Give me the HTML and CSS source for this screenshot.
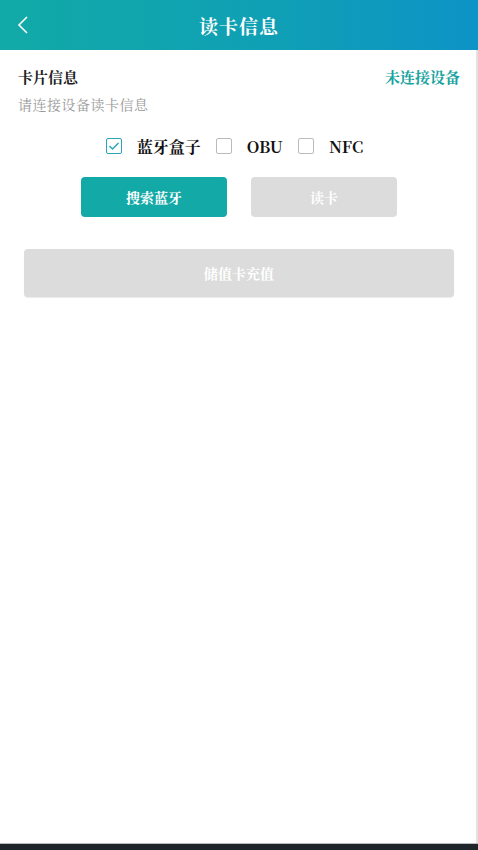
FILE: index.html
```html
<!DOCTYPE html>
<html lang="zh-CN">
<head>
  <meta charset="UTF-8" />
  <meta name="viewport" content="width=device-width, initial-scale=1.0" />
  <title>读卡信息</title>
  <link rel="stylesheet" href="styles.css">
</head>
<body>
  <div class="page">
    <div class="nav-bar">
      <span class="back">
        <svg width="14" height="20" viewBox="0 0 14 20"><path d="M11 2 L3 10 L11 18" fill="none" stroke="#fff" stroke-width="1.6"/></svg>
      </span>
      <h1>读卡信息</h1>
    </div>

    <div class="content">
      <div class="info-head">
        <span class="info-title">卡片信息</span>
        <span class="status">未连接设备</span>
      </div>
      <p class="hint">请连接设备读卡信息</p>

      <div class="modes">
        <label class="mode">
          <span class="box checked">
            <svg width="12" height="10" viewBox="0 0 12 10"><path d="M1.5 5 L4.5 8 L10.5 2" fill="none" stroke="#2aa6b4" stroke-width="1.5"/></svg>
          </span>
          <span>蓝牙盒子</span>
        </label>
        <label class="mode">
          <span class="box"></span>
          <span>OBU</span>
        </label>
        <label class="mode">
          <span class="box"></span>
          <span>NFC</span>
        </label>
      </div>

      <div class="actions">
        <button class="btn primary">搜索蓝牙</button>
        <button class="btn disabled">读卡</button>
      </div>

      <button class="btn wide disabled">储值卡充值</button>
    </div>

    <div class="bottom-bar"></div>
  </div>
</body>
</html>
```

FILE: styles.css
```css
* {
  margin: 0;
  padding: 0;
  box-sizing: border-box;
}

body {
  font-family: "Noto Serif CJK SC", "Liberation Serif", serif;
  background: #fff;
  height: 850px;
  overflow: hidden;
}

.page {
  height: 850px;
  display: flex;
  flex-direction: column;
  border-right: 2px solid #e2e2e2;
}

.nav-bar {
  height: 50px;
  background: linear-gradient(90deg, #12aaa7 0%, #0f9fb6 60%, #0d93c6 100%);
  display: flex;
  align-items: center;
  justify-content: center;
  position: relative;
  margin-right: -2px;
}

.back {
  position: absolute;
  left: 16px;
  top: 15px;
}

.nav-bar h1 {
  color: #fff;
  font-size: 19px;
  font-weight: bold;
  letter-spacing: 1px;
}

.content {
  flex: 1;
  padding: 0 16px 0 18px;
}

.info-head {
  display: flex;
  justify-content: space-between;
  align-items: center;
  margin-top: 15px;
  height: 22px;
}

.info-title {
  font-size: 15px;
  font-weight: bold;
  color: #222;
}

.status {
  font-size: 15px;
  font-weight: bold;
  color: #17a39f;
}

.hint {
  font-size: 14px;
  color: #9a9a9a;
  margin-top: 7px;
  letter-spacing: 0.5px;
}

.modes {
  display: flex;
  justify-content: center;
  gap: 15px;
  margin-top: 20px;
  height: 24px;
  align-items: center;
  padding-right: 9px;
}

.mode {
  display: flex;
  align-items: center;
  gap: 15px;
  font-size: 16px;
  font-weight: bold;
  color: #111;
}

.box {
  width: 16px;
  height: 16px;
  border: 1px solid #bbb;
  border-radius: 2px;
  display: flex;
  align-items: center;
  justify-content: center;
}

.box.checked {
  border-color: #2aa6b4;
}

.actions {
  display: flex;
  justify-content: center;
  gap: 24px;
  margin-top: 19px;
}

.btn {
  border: none;
  border-radius: 4px;
  color: #fff;
  font-family: inherit;
  font-size: 14px;
  font-weight: bold;
  height: 40px;
  width: 146px;
}

.primary {
  background: #12a9a7;
}

.disabled {
  background: #dcdcdc;
}

.wide {
  display: block;
  width: 430px;
  height: 48px;
  margin-top: 32px;
  margin-left: 6px;
  box-shadow: 0 1px 1px rgba(0, 0, 0, 0.08);
}

.bottom-bar {
  height: 7px;
  background: #1f262b;
  border-top: 1px solid #bbb;
  margin-right: -2px;
}
```
